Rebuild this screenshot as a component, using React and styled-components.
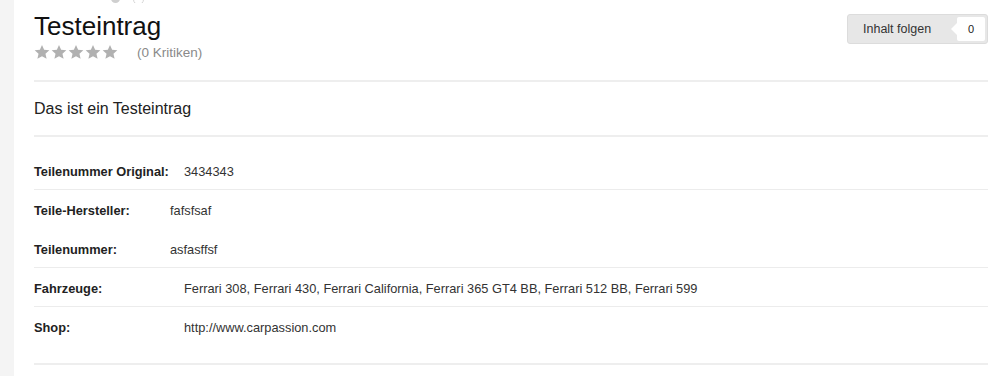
import styled, { createGlobalStyle } from 'styled-components'

const GlobalStyle = createGlobalStyle`
  body {
    margin: 0;
    background: #fff;
    font-family: "Liberation Sans", Arial, sans-serif;
    color: #222;
  }
`

const Page = styled.div`
  display: flex;
  min-height: 376px;
`

const Sidebar = styled.div`
  width: 14px;
  flex-shrink: 0;
  background: #f4f4f4;
`

const Main = styled.main`
  flex: 1;
  padding: 0 6px 0 20px;
  overflow: hidden;
`

const TopIcons = styled.div`
  height: 3px;
  overflow: hidden;
  display: flex;
  gap: 13px;
  padding-left: 77px;

  span {
    width: 9px;
    height: 9px;
    border-radius: 50%;
    margin-top: -6px;
    background: #cfcfcf;
  }
  span + span {
    background: transparent;
    border: 1px solid #d6d6d6;
  }
`

const Header = styled.header`
  display: flex;
  justify-content: space-between;
  align-items: flex-start;
  padding: 8px 0 18px;
  border-bottom: 2px solid #eeeeee;
`

const Title = styled.h1`
  margin: 0;
  font-size: 26px;
  line-height: 31px;
  font-weight: normal;
  color: #111;
`

const Rating = styled.div`
  display: flex;
  align-items: center;
  height: 20px;
`

const Stars = styled.div`
  display: flex;
  gap: 1px;
  margin-right: 19px;

  svg {
    width: 16px;
    height: 16px;
    fill: #b1b1b1;
  }
`

const Reviews = styled.span`
  font-size: 13.5px;
  color: #8a8a8a;
`

const FollowButton = styled.button`
  display: flex;
  align-items: center;
  justify-content: space-between;
  width: 141px;
  height: 30px;
  margin-top: 3px;
  padding: 0 2px 0 15px;
  background: #e7e7e7;
  border: 1px solid #dcdcdc;
  border-radius: 3px;
  font-family: inherit;
  font-size: 12.5px;
  color: #333;
`

const Counter = styled.span`
  position: relative;
  width: 28px;
  height: 24px;
  line-height: 24px;
  background: #fff;
  border-radius: 2px;
  font-size: 11px;
  text-align: center;
  color: #222;

  &::before {
    content: '';
    position: absolute;
    left: -6px;
    top: 6px;
    border-style: solid;
    border-width: 6px 6px 6px 0;
    border-color: transparent #fff transparent transparent;
  }
`

const Description = styled.p`
  margin: 0;
  padding: 18px 0 17px;
  font-size: 16px;
  line-height: 18px;
  color: #222;
  border-bottom: 2px solid #eeeeee;
`

const Specs = styled.div`
  padding: 14px 0 17px;
  border-bottom: 2px solid #eeeeee;
`

const SpecRow = styled.div`
  display: grid;
  grid-template-columns: ${({ $labelWidth }) => $labelWidth}px 1fr;
  height: 36px;
  padding-top: 2px;
  line-height: 38px;
  border-bottom: 1px solid ${({ $divider }) => ($divider ? '#ececec' : 'transparent')};
  font-size: 12.8px;
  color: #333;
`

const Label = styled.span`
  font-weight: bold;
  color: #222;
`

const specs = [
  { label: 'Teilenummer Original:', value: '3434343', width: 150, divider: true },
  { label: 'Teile-Hersteller:', value: 'fafsfsaf', width: 136, divider: false },
  { label: 'Teilenummer:', value: 'asfasffsf', width: 136, divider: true },
  {
    label: 'Fahrzeuge:',
    value: 'Ferrari 308, Ferrari 430, Ferrari California, Ferrari 365 GT4 BB, Ferrari 512 BB, Ferrari 599',
    width: 150,
    divider: true,
  },
  { label: 'Shop:', value: 'http://www.carpassion.com', width: 150, divider: false },
]

function Star() {
  return (
    <svg viewBox="0 0 24 24">
      <path d="M12 1.5l3.2 7.1 7.8.8-5.8 5.2 1.7 7.6L12 18.3l-6.9 3.9 1.7-7.6L1 9.4l7.8-.8z" />
    </svg>
  )
}

export default function App() {
  return (
    <>
      <GlobalStyle />
      <Page>
        <Sidebar />
        <Main>
          <TopIcons>
            <span />
            <span />
          </TopIcons>
          <Header>
            <div>
              <Title>Testeintrag</Title>
              <Rating>
                <Stars>
                  {[0, 1, 2, 3, 4].map(i => (
                    <Star key={i} />
                  ))}
                </Stars>
                <Reviews>(0 Kritiken)</Reviews>
              </Rating>
            </div>
            <FollowButton>
              <span>Inhalt folgen</span>
              <Counter>0</Counter>
            </FollowButton>
          </Header>
          <Description>Das ist ein Testeintrag</Description>
          <Specs>
            {specs.map(spec => (
              <SpecRow key={spec.label} $labelWidth={spec.width} $divider={spec.divider}>
                <Label>{spec.label}</Label>
                <span>{spec.value}</span>
              </SpecRow>
            ))}
          </Specs>
        </Main>
      </Page>
    </>
  )
}
